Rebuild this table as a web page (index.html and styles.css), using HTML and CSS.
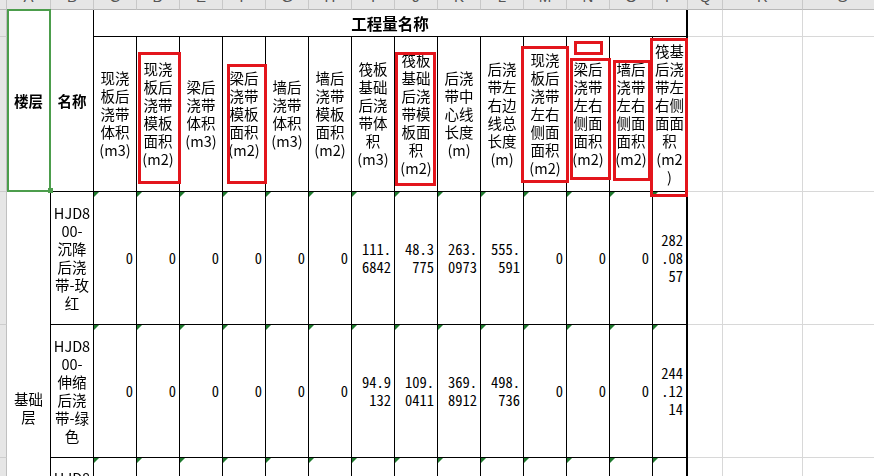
FILE: index.html
```html
<!DOCTYPE html>
<html lang="zh-CN">
<head>
<meta charset="utf-8">
<title>工程量</title>
<link rel="stylesheet" href="styles.css">
</head>
<body>
<div class="sheet">
  <div class="corner"></div>
  <div class="ch"><span>A</span></div><div class="ch"><span>B</span></div><div class="ch"><span>C</span></div><div class="ch"><span>D</span></div><div class="ch"><span>E</span></div><div class="ch"><span>F</span></div><div class="ch"><span>G</span></div><div class="ch"><span>H</span></div><div class="ch"><span>I</span></div><div class="ch"><span>J</span></div><div class="ch"><span>K</span></div><div class="ch"><span>L</span></div><div class="ch"><span>M</span></div><div class="ch"><span>N</span></div><div class="ch"><span>O</span></div><div class="ch"><span>P</span></div><div class="ch"><span>Q</span></div><div class="ch"><span>R</span></div><div class="ch"><span>S</span></div>

  <div class="rh sel-rh"></div>
  <div class="cell bold span2r">楼层</div>
  <div class="cell bold span2r">名称</div>
  <div class="cell bold title span14c">工程量名称</div>
  <div class="blank"></div><div class="blank"></div><div class="blank"></div>

  <div class="rh sel-rh"></div>
  <div class="cell">现浇<br>板后<br>浇带<br>体积<br>(m3)</div>
  <div class="cell">现浇<br>板后<br>浇带<br>模板<br>面积<br>(m2)</div>
  <div class="cell">梁后<br>浇带<br>体积<br>(m3)</div>
  <div class="cell">梁后<br>浇带<br>模板<br>面积<br>(m2)</div>
  <div class="cell">墙后<br>浇带<br>体积<br>(m3)</div>
  <div class="cell">墙后<br>浇带<br>模板<br>面积<br>(m2)</div>
  <div class="cell">筏板<br>基础<br>后浇<br>带体<br>积<br>(m3)</div>
  <div class="cell">筏板<br>基础<br>后浇<br>带模<br>板面<br>积<br>(m2)</div>
  <div class="cell">后浇<br>带中<br>心线<br>长度<br>(m)</div>
  <div class="cell">后浇<br>带左<br>右边<br>线总<br>长度<br>(m)</div>
  <div class="cell">现浇<br>板后<br>浇带<br>左右<br>&#x4FA7;面<br>面积<br>(m2)</div>
  <div class="cell">梁后<br>浇带<br>左右<br>&#x4FA7;面<br>面积<br>(m2)</div>
  <div class="cell">墙后<br>浇带<br>左右<br>&#x4FA7;面<br>面积<br>(m2)</div>
  <div class="cell lastcol">筏基<br>后浇<br>带左<br>右&#x4FA7;<br>面面<br>积<br>(m2<br>)</div>
  <div class="blank"></div><div class="blank"></div><div class="blank"></div>

  <div class="rh"></div>
  <div class="cell span3r">基础<br>层</div>
  <div class="cell">HJD8<br>00-<br>沉降<br>后浇<br>带-玫<br>红</div>
  <div class="cell num">0</div><div class="cell num">0</div><div class="cell num">0</div><div class="cell num">0</div><div class="cell num">0</div><div class="cell num">0</div>
  <div class="cell num">111.<br>6842</div>
  <div class="cell num">48.3<br>775</div>
  <div class="cell num">263.<br>0973</div>
  <div class="cell num">555.<br>591</div>
  <div class="cell num">0</div><div class="cell num">0</div><div class="cell num">0</div>
  <div class="cell num lastcol">282<br>.08<br>57</div>
  <div class="blank"></div><div class="blank"></div><div class="blank"></div>

  <div class="rh"></div>
  <div class="cell">HJD8<br>00-<br>伸缩<br>后浇<br>带-绿<br>色</div>
  <div class="cell num">0</div><div class="cell num">0</div><div class="cell num">0</div><div class="cell num">0</div><div class="cell num">0</div><div class="cell num">0</div>
  <div class="cell num">94.9<br>132</div>
  <div class="cell num">109.<br>0411</div>
  <div class="cell num">369.<br>8912</div>
  <div class="cell num">498.<br>736</div>
  <div class="cell num">0</div><div class="cell num">0</div><div class="cell num">0</div>
  <div class="cell num lastcol">244<br>.12<br>14</div>
  <div class="blank"></div><div class="blank"></div><div class="blank"></div>

  <div class="rh"></div>
  <div class="cell">HJD8<br>00-<br>超前<br>止水<br>后浇<br>带-<br>蓝<br>色</div>
  <div class="cell num">0</div><div class="cell num">0</div><div class="cell num">0</div><div class="cell num">0</div><div class="cell num">0</div><div class="cell num">0</div>
  <div class="cell num">52.6<br>308</div>
  <div class="cell num">61.0<br>152</div>
  <div class="cell num">198.<br>4410</div>
  <div class="cell num">265.<br>102</div>
  <div class="cell num">0</div><div class="cell num">0</div><div class="cell num">0</div>
  <div class="cell num lastcol">131<br>.20<br>66</div>
  <div class="blank"></div><div class="blank"></div><div class="blank"></div>

  <div class="selbox"></div>
  <div class="mark mark-d"></div>
  <div class="mark mark-f"></div>
  <div class="mark mark-j"></div>
  <div class="mark mark-m"></div>
  <div class="mark mark-n0"></div>
  <div class="mark mark-n"></div>
  <div class="mark mark-o"></div>
  <div class="mark mark-p"></div>
</div>
</body>
</html>
```
FILE: styles.css
```css
html, body {
  margin: 0;
  padding: 0;
}
body {
  width: 874px;
  height: 476px;
  overflow: hidden;
  background: #fff;
  color: #000;
  font-family: "Noto Sans CJK SC", "Noto Sans CJK JP", "Noto Sans CJK TC", sans-serif;
  font-size: 14.5px;
}
.sheet {
  position: relative;
  display: grid;
  grid-template-columns: 7px 44px 43px repeat(13, 43px) 35px 35px 80px 80px;
  grid-template-rows: 10px 27px 155px 133px 133px 166px;
}
.sheet > div {
  box-sizing: border-box;
  min-width: 0;
}
.corner {
  background: #e6e6e6;
  border-right: 1px solid #c4c4c4;
  border-bottom: 1px solid #b8b8b8;
}
.ch {
  background: #e6e6e6;
  border-right: 1px solid #c8c8c8;
  border-bottom: 1px solid #b8b8b8;
  overflow: hidden;
  text-align: center;
  color: #555;
  font-family: "Liberation Sans", Arial, sans-serif;
  font-size: 15px;
}
.ch span {
  display: block;
  margin-top: -13px;
  line-height: 20px;
}
.rh {
  background: #e6e6e6;
  border-right: 1px solid #c0c0c0;
  border-bottom: 1px solid #cdcdcd;
}
.sel-rh {
  background: #e6e6e6;
}
.cell {
  position: relative;
  border-right: 1px solid #000;
  border-bottom: 1px solid #000;
  display: flex;
  align-items: center;
  justify-content: center;
  text-align: center;
  line-height: 18px;
  white-space: nowrap;
  overflow: hidden;
  font-weight: 400;
  filter: grayscale(1);
}
.bold {
  font-weight: 700;
  font-size: 14.5px;
}
.title {
  font-size: 15.5px;
  border-right-width: 2px;
}
.span2r { grid-row: span 2; }
.span3r { grid-row: span 3; }
.span14c { grid-column: span 14; }
.num {
  justify-content: flex-end;
  text-align: right;
  padding-right: 3px;
  font-family: "Noto Sans Mono CJK SC", "Liberation Mono", monospace;
  filter: none;
}
.num::before {
  content: "";
  position: absolute;
  left: 0;
  top: 0;
  width: 0;
  height: 0;
  border-top: 5px solid #1f7a2e;
  border-right: 5px solid transparent;
}
.lastcol {
  border-right-width: 2px;
}
.blank {
  border-right: 1px solid #d8d8d8;
  border-bottom: 1px solid #d8d8d8;
}
.selbox {
  position: absolute;
  left: 7px;
  top: 9px;
  width: 44px;
  height: 183px;
  border: 2px solid #4c9d4c;
  box-sizing: border-box;
}
.selbox::after {
  content: "";
  position: absolute;
  right: -4px;
  bottom: -3px;
  width: 5px;
  height: 5px;
  background: #4c9d4c;
}
.mark {
  position: absolute;
  box-sizing: border-box;
  border: 3px solid #e3151c;
}
.mark-d { left: 138px; top: 52px; width: 43px; height: 132px; }
.mark-f { left: 227px; top: 64px; width: 40px; height: 120px; }
.mark-j { left: 395px; top: 52px; width: 41px; height: 134px; }
.mark-m { left: 521px; top: 46px; width: 48px; height: 137px; }
.mark-n0 { left: 574px; top: 41px; width: 29px; height: 14px; }
.mark-n { left: 570px; top: 58px; width: 41px; height: 122px; }
.mark-o { left: 613px; top: 60px; width: 38px; height: 121px; }
.mark-p { left: 650px; top: 38px; width: 38px; height: 159px; }
```
